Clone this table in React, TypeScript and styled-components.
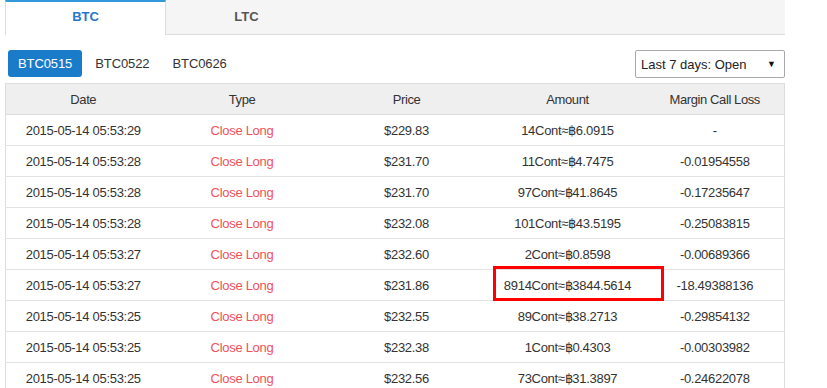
import styled, { createGlobalStyle } from "styled-components"

type Trade = {
    date: string
    type: string
    price: string
    amount: string
    loss: string
    flagged?: boolean
}

const trades: Trade[] = [
    { date: "2015-05-14 05:53:29", type: "Close Long", price: "$229.83", amount: "14Cont≈฿6.0915", loss: "-" },
    { date: "2015-05-14 05:53:28", type: "Close Long", price: "$231.70", amount: "11Cont≈฿4.7475", loss: "-0.01954558" },
    { date: "2015-05-14 05:53:28", type: "Close Long", price: "$231.70", amount: "97Cont≈฿41.8645", loss: "-0.17235647" },
    { date: "2015-05-14 05:53:28", type: "Close Long", price: "$232.08", amount: "101Cont≈฿43.5195", loss: "-0.25083815" },
    { date: "2015-05-14 05:53:27", type: "Close Long", price: "$232.60", amount: "2Cont≈฿0.8598", loss: "-0.00689366" },
    { date: "2015-05-14 05:53:27", type: "Close Long", price: "$231.86", amount: "8914Cont≈฿3844.5614", loss: "-18.49388136", flagged: true },
    { date: "2015-05-14 05:53:25", type: "Close Long", price: "$232.55", amount: "89Cont≈฿38.2713", loss: "-0.29854132" },
    { date: "2015-05-14 05:53:25", type: "Close Long", price: "$232.38", amount: "1Cont≈฿0.4303", loss: "-0.00303982" },
    { date: "2015-05-14 05:53:25", type: "Close Long", price: "$232.56", amount: "73Cont≈฿31.3897", loss: "-0.24622078" }
]

const columns = [
    { label: "Date", width: 155 },
    { label: "Type", width: 163 },
    { label: "Price", width: 166 },
    { label: "Amount", width: 156 },
    { label: "Margin Call Loss", width: 139 }
]

const contracts = ["BTC0515", "BTC0522", "BTC0626"]

export default function App() {
    return (
        <>
            <GlobalStyle />
            <Page>
                <Tabs>
                    <Tab $active>BTC</Tab>
                    <Tab>LTC</Tab>
                </Tabs>

                <Toolbar>
                    <Pills>
                        {contracts.map((c, i) => (
                            <Pill key={c} $active={i === 0}>
                                {c}
                            </Pill>
                        ))}
                    </Pills>
                    <Select>
                        <span>Last 7 days: Open</span>
                        <Caret>▼</Caret>
                    </Select>
                </Toolbar>

                <Table>
                    <colgroup>
                        {columns.map((c) => (
                            <col key={c.label} style={{ width: c.width }} />
                        ))}
                    </colgroup>
                    <thead>
                        <tr>
                            {columns.map((c) => (
                                <Th key={c.label}>{c.label}</Th>
                            ))}
                        </tr>
                    </thead>
                    <tbody>
                        {trades.map((t, i) => (
                            <tr key={`trade-${i}`}>
                                <Td>{t.date}</Td>
                                <Td $red>{t.type}</Td>
                                <Td>{t.price}</Td>
                                <Td>
                                    {t.amount}
                                    {t.flagged && <Highlight />}
                                </Td>
                                <Td>{t.loss}</Td>
                            </tr>
                        ))}
                    </tbody>
                </Table>
            </Page>
        </>
    )
}

const GlobalStyle = createGlobalStyle`
    html, body {
        margin: 0;
        padding: 0;
        background: #fff;
        overflow: hidden;
    }

    body {
        font-family: "Liberation Sans", Arial, sans-serif;
        color: #333;
    }
`

const Page = styled.div`
    width: 780px;
    margin-left: 5px;
`

const Tabs = styled.div`
    display: flex;
    height: 34px;
    background: #f5f5f5;
    border-bottom: 1px solid #ddd;
`

const Tab = styled.div<{ $active?: boolean }>`
    width: 161px;
    display: flex;
    align-items: center;
    justify-content: center;
    box-sizing: border-box;
    font-size: 13px;
    font-weight: bold;
    color: ${({ $active }) => ($active ? "#2677cc" : "#555")};
    background: ${({ $active }) => ($active ? "#fff" : "transparent")};
    border-top: 2px solid ${({ $active }) => ($active ? "#3498db" : "transparent")};
    border-left: 1px solid ${({ $active }) => ($active ? "#ddd" : "transparent")};
    border-right: 1px solid ${({ $active }) => ($active ? "#ddd" : "transparent")};
    margin-bottom: ${({ $active }) => ($active ? "-1px" : "0")};
    padding-bottom: ${({ $active }) => ($active ? "4px" : "3px")};
`

const Toolbar = styled.div`
    display: flex;
    justify-content: space-between;
    align-items: flex-start;
    padding: 15px 0 5px 3px;
`

const Pills = styled.div`
    display: flex;
    gap: 3px;
`

const Pill = styled.div<{ $active?: boolean }>`
    height: 27px;
    line-height: 27px;
    padding: 0 10px;
    border-radius: 3px;
    font-size: 13px;
    letter-spacing: -0.1px;
    color: ${({ $active }) => ($active ? "#fff" : "#333")};
    background: ${({ $active }) => ($active ? "#1a7bc9" : "transparent")};
`

const Select = styled.div`
    width: 150px;
    height: 28px;
    box-sizing: border-box;
    border: 1px solid #a9a9a9;
    border-radius: 2px;
    display: flex;
    align-items: center;
    justify-content: space-between;
    padding: 0 8px 0 5px;
    font-size: 13px;
    color: #222;
`

const Caret = styled.span`
    font-size: 9px;
    color: #111;
`

const Table = styled.table`
    width: 780px;
    table-layout: fixed;
    border-collapse: collapse;
    border-left: 1px solid #ddd;
    border-right: 1px solid #ddd;
    font-size: 13px;
`

const Th = styled.th`
    height: 30px;
    padding: 0;
    background: #efefef;
    border-top: 1px solid #ddd;
    border-bottom: 1px solid #ddd;
    font-weight: normal;
    color: #333;
    letter-spacing: -0.4px;
    text-align: center;
`

const Td = styled.td<{ $red?: boolean }>`
    position: relative;
    height: 30px;
    padding: 0;
    border-bottom: 1px solid #e3e3e3;
    text-align: center;
    letter-spacing: -0.3px;
    color: ${({ $red }) => ($red ? "#f0525a" : "#333")};
    white-space: nowrap;
`

const Highlight = styled.span`
    position: absolute;
    left: 3px;
    top: -4px;
    width: 171px;
    height: 35px;
    box-sizing: border-box;
    border: 3px solid #f00;
    pointer-events: none;
`
